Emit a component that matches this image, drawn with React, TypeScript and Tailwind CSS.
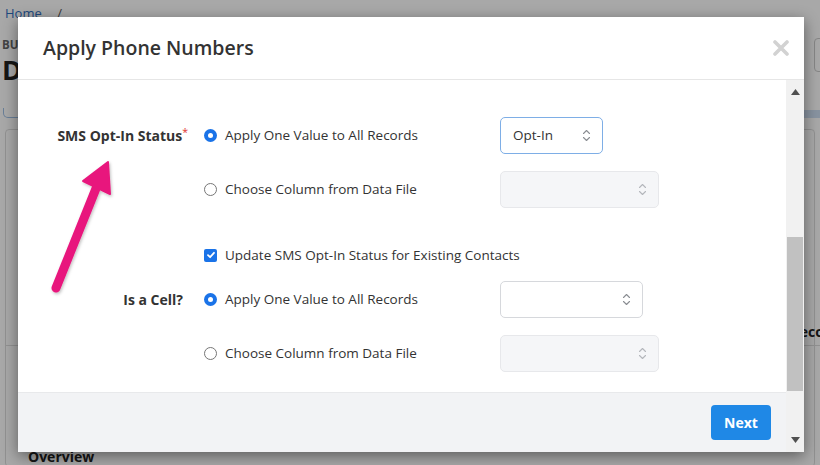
import React from "react";

function Chevrons({ color = "#8a8d92" }: { color?: string }) {
  return (
    <svg width="9" height="13" viewBox="0 0 9 13" fill="none" stroke={color} strokeWidth="1.1" strokeLinecap="round" strokeLinejoin="round">
      <path d="M1.5 4.5 L4.5 1.5 L7.5 4.5" />
      <path d="M1.5 8.5 L4.5 11.5 L7.5 8.5" />
    </svg>
  );
}

function Radio({ checked }: { checked?: boolean }) {
  return checked ? (
    <span className="flex h-[13px] w-[13px] shrink-0 items-center justify-center rounded-full bg-[#1a73e8]">
      <span className="h-[5px] w-[5px] rounded-full bg-white" />
    </span>
  ) : (
    <span className="h-[13px] w-[13px] shrink-0 rounded-full border border-[#767676] bg-white" />
  );
}

function Checkbox() {
  return (
    <span className="flex h-[13px] w-[13px] shrink-0 items-center justify-center rounded-[2px] bg-[#1a73e8]">
      <svg width="10" height="10" viewBox="0 0 10 10" fill="none" stroke="white" strokeWidth="1.8" strokeLinecap="round" strokeLinejoin="round">
        <path d="M2 5.2 L4.1 7.2 L8 2.8" />
      </svg>
    </span>
  );
}

function Select({ w, value, variant }: { w: string; value?: string; variant: "focus" | "plain" | "disabled" }) {
  const cls =
    variant === "focus"
      ? "border-[#7eaee6] bg-white"
      : variant === "plain"
      ? "border-[#d6d8dc] bg-white"
      : "border-[#e7e8eb] bg-[#f5f6f8]";
  return (
    <div className={`flex h-[37px] items-center justify-between rounded-[5px] border pl-[12px] pr-[11px] ${w} ${cls}`}>
      <span className="text-[13.5px] text-[#333]">{value ?? ""}</span>
      <Chevrons color={variant === "disabled" ? "#b4b7bc" : "#8a8d92"} />
    </div>
  );
}

function OptionText({ children }: { children: React.ReactNode }) {
  return <span className="whitespace-nowrap text-[13.5px] text-[#333]">{children}</span>;
}

export default function App() {
  return (
    <div
      className="relative h-[465px] w-[820px] overflow-hidden bg-white"
      style={{ fontFamily: '"Open Sans", "Noto Sans", sans-serif' }}
    >
      {/* background page */}
      <div className="flex h-full flex-col">
        <div className="px-[5px] pt-[4px] text-[13px] text-[#2f6fbf]">
          Home <span className="ml-[12px] text-[#555]">/</span>
        </div>
        <div className="mt-[14px] flex items-start justify-between pl-[2px]">
          <div className="flex w-[16px] flex-col gap-[3px] overflow-hidden">
            <span className="text-[11.5px] font-bold leading-[14px] text-[#666]">BU</span>
            <span className="text-[27px] font-bold leading-[29px] text-[#222]">D</span>
          </div>
          <div className="mr-[-20px] mt-[0px] h-[34px] w-[26px] rounded-[4px] border border-[#ccc]" />
        </div>
        <div className="mt-[24px] flex h-[12px] items-stretch justify-between px-[3px]">
          <div className="w-[40px] rounded-b-[5px] border border-t-0 border-[#9fc0e6]" />
          <div className="mr-[-3px] mt-[2px] h-[8px] w-[16px] bg-[#cfe0f3]" />
        </div>
        <div className="mx-[5px] mt-[11px] flex flex-1 flex-col rounded-[4px] border border-[#ddd]">
          <div className="h-[192px] shrink-0" />
          <div className="mr-[-32px] flex justify-end border-b border-[#ddd] pb-[4px] text-[14px] font-bold leading-[19px] text-[#222]">
            Records
          </div>
          <div className="h-[101px] shrink-0" />
          <div className="pl-[22px] text-[14px] font-bold leading-[19px] text-[#222]">Overview</div>
        </div>
      </div>

      {/* overlay */}
      <div className="absolute inset-0 bg-black/[0.34]" />

      {/* modal */}
      <div className="absolute left-[18px] top-[17px] flex h-[435px] w-[786px] flex-col bg-white shadow-[0_4px_14px_rgba(0,0,0,0.45)]">
        <div className="flex h-[63px] shrink-0 items-center justify-between border-b border-[#e6e6e6] pl-[25px] pr-[15px]">
          <h1 className="text-[19.5px] font-semibold text-[#333]">Apply Phone Numbers</h1>
          <svg width="16" height="16" viewBox="0 0 16 16" className="mb-[1px]">
            <path d="M2 2 L14 14 M14 2 L2 14" stroke="#d2d2d2" strokeWidth="3.6" strokeLinecap="round" />
          </svg>
        </div>
        <div className="flex min-h-0 flex-1">
          <div className="flex min-w-0 flex-1 flex-col">
            <div className="flex-1 pt-[37px]">
              <div className="flex h-[37px] items-center">
                <div className="w-[170px] text-right text-[14px] font-bold text-[#333]">
                  SMS Opt-In Status<sup className="font-normal text-[#e0322f]">*</sup>
                </div>
                <div className="ml-[16px] flex w-[296px] items-center gap-[8px]">
                  <Radio checked />
                  <OptionText>Apply One Value to All Records</OptionText>
                </div>
                <Select w="w-[103px]" value="Opt-In" variant="focus" />
              </div>
              <div className="mt-[17px] flex h-[37px] items-center">
                <div className="w-[170px]" />
                <div className="ml-[16px] flex w-[296px] items-center gap-[8px]">
                  <Radio />
                  <OptionText>Choose Column from Data File</OptionText>
                </div>
                <Select w="w-[159px]" variant="disabled" />
              </div>
              <div className="mt-[37px] flex h-[20px] items-center">
                <div className="w-[170px]" />
                <div className="ml-[16px] flex items-center gap-[8px]">
                  <Checkbox />
                  <OptionText>Update SMS Opt-In Status for Existing Contacts</OptionText>
                </div>
              </div>
              <div className="mt-[16px] flex h-[37px] items-center">
                <div className="w-[165px] text-right text-[14px] font-bold text-[#333]">Is a Cell?</div>
                <div className="ml-[21px] flex w-[296px] items-center gap-[8px]">
                  <Radio checked />
                  <OptionText>Apply One Value to All Records</OptionText>
                </div>
                <Select w="w-[143px]" variant="plain" />
              </div>
              <div className="mt-[17px] flex h-[37px] items-center">
                <div className="w-[170px]" />
                <div className="ml-[16px] flex w-[296px] items-center gap-[8px]">
                  <Radio />
                  <OptionText>Choose Column from Data File</OptionText>
                </div>
                <Select w="w-[159px]" variant="disabled" />
              </div>
            </div>
            <div className="flex h-[60px] shrink-0 items-center justify-end border-t border-[#e8e9eb] bg-[#f2f3f5] pr-[15px]">
              <button className="h-[35px] w-[60px] rounded-[4px] bg-[#1f88e6] text-[14px] font-bold text-white">
                Next
              </button>
            </div>
          </div>
          {/* scrollbar */}
          <div className="flex w-[18px] shrink-0 flex-col bg-[#f1f1f1]">
            <div className="flex h-[24px] items-center justify-center">
              <svg width="9" height="6" viewBox="0 0 9 6"><path d="M4.5 0 L9 6 L0 6 Z" fill="#505050" /></svg>
            </div>
            <div className="h-[133px]" />
            <div className="mx-[1px] h-[154px] bg-[#c1c1c1]" />
            <div className="flex-1" />
            <div className="flex h-[24px] items-center justify-center">
              <svg width="9" height="6" viewBox="0 0 9 6"><path d="M0 0 L9 0 L4.5 6 Z" fill="#505050" /></svg>
            </div>
          </div>
        </div>
      </div>

      {/* pink annotation arrow */}
      <svg className="absolute left-0 top-0" width="820" height="465" style={{ pointerEvents: "none" }}>
        <defs>
          <filter id="sh" x="-50%" y="-50%" width="200%" height="200%">
            <feDropShadow dx="1" dy="1.5" stdDeviation="1.5" floodColor="#000" floodOpacity="0.25" />
          </filter>
        </defs>
        <g filter="url(#sh)">
          <line x1="56" y1="288" x2="97" y2="186" stroke="#e8197d" strokeWidth="9" strokeLinecap="round" />
          <path d="M108 162 L83 181 L110 194 Z" fill="#e8197d" stroke="#e8197d" strokeWidth="2" strokeLinejoin="round" />
        </g>
      </svg>
    </div>
  );
}
